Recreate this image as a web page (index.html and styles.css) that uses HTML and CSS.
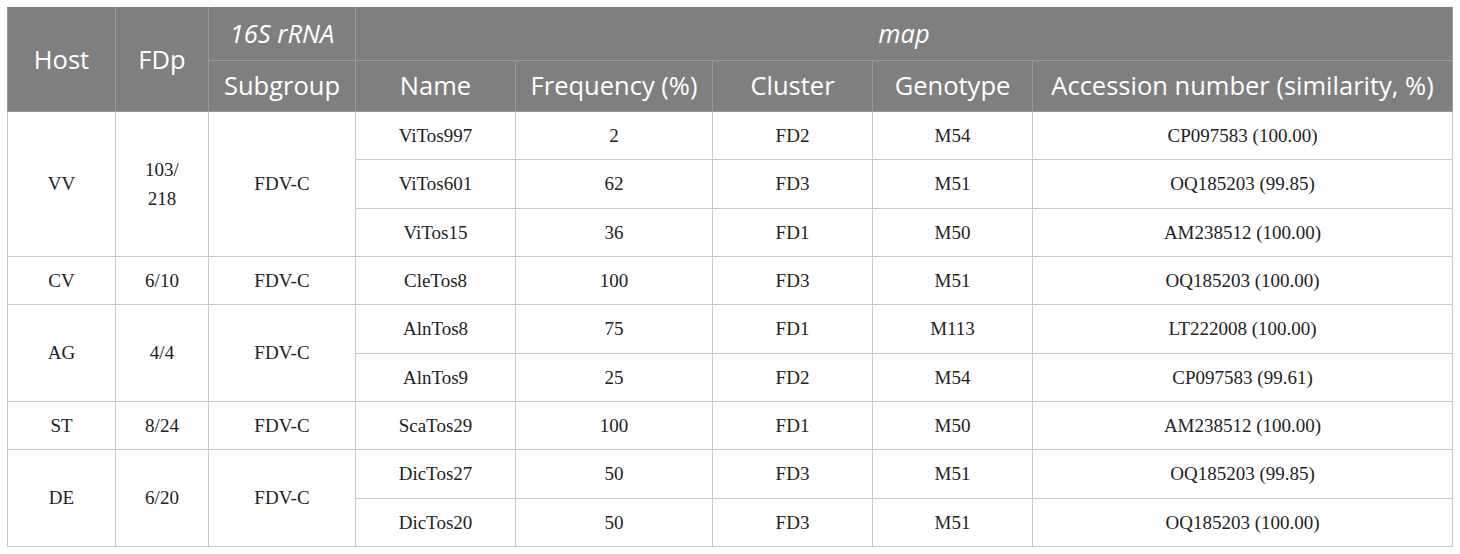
FILE: index.html
```html
<!DOCTYPE html>
<html>
<head>
<meta charset="utf-8">
<link rel="stylesheet" href="styles.css">
</head>
<body>
<table class="data">
  <colgroup>
    <col class="c-host"><col class="c-fdp"><col class="c-sub"><col class="c-name"><col class="c-freq"><col class="c-clu"><col class="c-gen"><col class="c-acc">
  </colgroup>
  <thead>
    <tr class="h1">
      <th rowspan="2">Host</th>
      <th rowspan="2">FDp</th>
      <th class="it">16S rRNA</th>
      <th colspan="5" class="it">map</th>
    </tr>
    <tr class="h2">
      <th>Subgroup</th>
      <th>Name</th>
      <th>Frequency (%)</th>
      <th>Cluster</th>
      <th>Genotype</th>
      <th>Accession number (similarity, %)</th>
    </tr>
  </thead>
  <tbody>
    <tr>
      <td rowspan="3">VV</td>
      <td rowspan="3" class="wrap">103/<br>218</td>
      <td rowspan="3">FDV-C</td>
      <td>ViTos997</td><td>2</td><td>FD2</td><td>M54</td><td>CP097583 (100.00)</td>
    </tr>
    <tr><td>ViTos601</td><td>62</td><td>FD3</td><td>M51</td><td>OQ185203 (99.85)</td></tr>
    <tr><td>ViTos15</td><td>36</td><td>FD1</td><td>M50</td><td>AM238512 (100.00)</td></tr>
    <tr>
      <td>CV</td><td>6/10</td><td>FDV-C</td>
      <td>CleTos8</td><td>100</td><td>FD3</td><td>M51</td><td>OQ185203 (100.00)</td>
    </tr>
    <tr>
      <td rowspan="2">AG</td><td rowspan="2">4/4</td><td rowspan="2">FDV-C</td>
      <td>AlnTos8</td><td>75</td><td>FD1</td><td>M113</td><td>LT222008 (100.00)</td>
    </tr>
    <tr><td>AlnTos9</td><td>25</td><td>FD2</td><td>M54</td><td>CP097583 (99.61)</td></tr>
    <tr>
      <td>ST</td><td>8/24</td><td>FDV-C</td>
      <td>ScaTos29</td><td>100</td><td>FD1</td><td>M50</td><td>AM238512 (100.00)</td>
    </tr>
    <tr>
      <td rowspan="2">DE</td><td rowspan="2">6/20</td><td rowspan="2">FDV-C</td>
      <td>DicTos27</td><td>50</td><td>FD3</td><td>M51</td><td>OQ185203 (99.85)</td>
    </tr>
    <tr><td>DicTos20</td><td>50</td><td>FD3</td><td>M51</td><td>OQ185203 (100.00)</td></tr>
  </tbody>
</table>
</body>
</html>
```
FILE: styles.css
```css
html, body {
  margin: 0;
  padding: 0;
  background: #ffffff;
}
body {
  padding: 7px 0 0 7px;
}
.data {
  border-collapse: collapse;
  table-layout: fixed;
  width: 1446px;
  border: 1px solid #bdbdbd;
}
.c-host { width: 108px; }
.c-fdp { width: 93px; }
.c-sub { width: 147px; }
.c-name { width: 160px; }
.c-freq { width: 197px; }
.c-clu { width: 160px; }
.c-gen { width: 160px; }
.c-acc { width: 420px; }

.data th {
  background: #7f7f7f;
  color: #ffffff;
  font-family: "Open Sans", "Noto Sans", sans-serif;
  font-weight: 400;
  font-size: 25.5px;
  line-height: 1.3;
  text-align: center;
  padding: 0;
  border: 1px solid #9a9a9a;
  border-top-color: #7f7f7f;
}
.data th.it {
  font-style: italic;
}
.data .h1 th { height: 52px; }
.data .h2 th { height: 50px; }
.data tbody tr { height: 48.33px; }
.data td {
  font-family: "Liberation Serif", "Times New Roman", serif;
  font-size: 19px;
  color: #222222;
  text-align: center;
  padding: 0;
  border: 1px solid #c8c8c8;
  line-height: 1.45;
}
.data td.wrap {
  line-height: 1.55;
}
```
